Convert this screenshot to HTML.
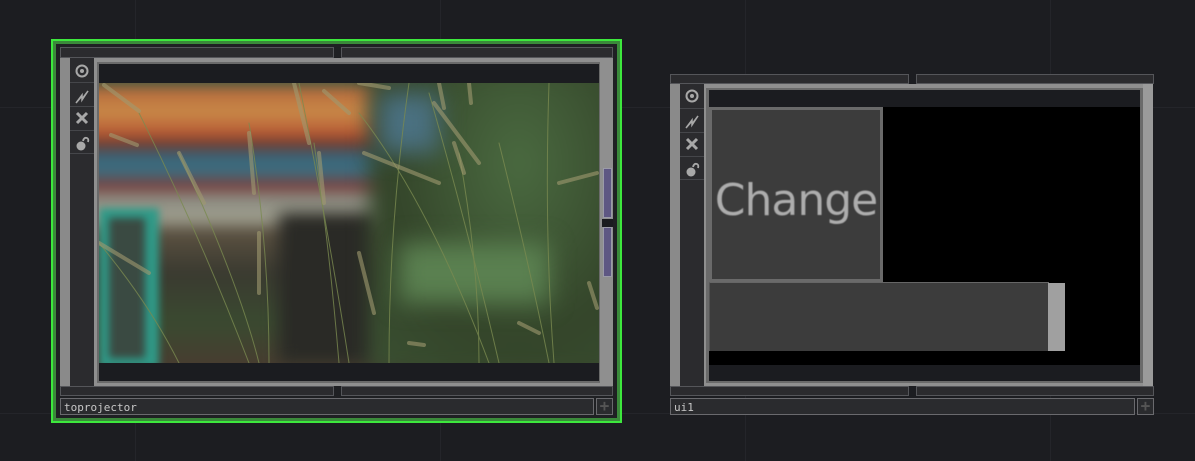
<!DOCTYPE html>
<html><head><style>
*{margin:0;padding:0;box-sizing:border-box}
body{width:1195px;height:461px;background:#1c1d21;position:relative;overflow:hidden;font-family:"DejaVu Sans Mono","Liberation Mono",monospace}
.a{position:absolute}
.gl{position:absolute;background:#24252a}
.tab{position:absolute;background:#2b2b2e;border:1px solid #55565a}
.name{position:absolute;background:#2a2b2e;border:1px solid #6a6a6e;color:#c8c8c8;font-size:11px;line-height:14px;padding-left:3px;padding-top:2px}
.plus{position:absolute;width:17px;height:17px;border:1px solid #6a6a6e;background:#2a2b2e;color:#555;font-size:16px;line-height:14px;text-align:center;font-weight:bold}
</style></head><body>
<div class="gl" style="left:135px;top:0;width:1px;height:461px"></div>
<div class="gl" style="left:440px;top:0;width:1px;height:461px"></div>
<div class="gl" style="left:745px;top:0;width:1px;height:461px"></div>
<div class="gl" style="left:1050px;top:0;width:1px;height:461px"></div>
<div class="gl" style="left:0;top:107px;width:1195px;height:1px"></div>
<div class="gl" style="left:0;top:413px;width:1195px;height:1px"></div>

<!-- left node -->
<div class="a" style="left:51px;top:39px;width:571px;height:384px;border:2px solid #3de83d;background:#3a8a3a"></div>
<div class="a" style="left:56px;top:44px;width:561px;height:374px;background:#1f2023"></div>
<div class="tab" style="left:60px;top:47px;width:274px;height:11px"></div>
<div class="tab" style="left:341px;top:47px;width:272px;height:11px"></div>
<div class="a" style="left:60px;top:58px;width:10px;height:328px;background:#8a8a8a"></div>
<div class="a" style="left:70px;top:58px;width:24px;height:328px;background:#2b2b2e"></div>
<div class="a" style="left:94px;top:58px;width:510px;height:328px;background:#8f8f8f"></div>
<div class="a" style="left:97px;top:62px;width:504px;height:321px;background:#6a6a6a"></div>
<div class="a" style="left:99px;top:64px;width:500px;height:317px;background:#1b1c20"></div>
<div class="a" style="left:99px;top:83px;width:500px;height:280px;overflow:hidden;background:#3e4a30">
 <div class="a" style="left:-20px;top:-10px;width:330px;height:310px;filter:blur(6px);background:linear-gradient(#4a5a40 0,#4a5a40 12px,#b86a3c 16px,#c98a48 40px,#b85a34 60px,#6a3a30 72px,#3a6478 82px,#3e6e80 100px,#7a3a38 112px,#8a8a80 125px,#a0a090 145px,#5a5040 160px,#3a3a30 200px,#3a4a30 250px,#4a3a30 300px)"></div>
 <div class="a" style="left:0;top:125px;width:60px;height:160px;filter:blur(4px);border:10px solid #2f9a88;border-right-width:14px;background:#3a4a42"></div>
 <div class="a" style="left:180px;top:130px;width:100px;height:150px;filter:blur(8px);background:#2a2a26"></div>
 <div class="a" style="left:270px;top:-10px;width:250px;height:300px;filter:blur(10px);background:radial-gradient(ellipse at 60% 30%,#4a6a40,#34452a 60%,#3a5032)"></div>
 <div class="a" style="left:280px;top:10px;width:60px;height:60px;filter:blur(12px);background:#4a7080"></div>
 <div class="a" style="left:300px;top:160px;width:150px;height:60px;filter:blur(12px);background:#5a8050"></div>
 <svg class="a" style="left:0;top:0" width="500" height="280" stroke-linecap="round" fill="none">
  <g stroke="#7a8a50" stroke-width="1" opacity=".8">
   <path d="M40 30 Q100 150 150 280"/><path d="M80 70 Q140 200 160 280"/><path d="M150 40 Q170 160 170 280"/>
   <path d="M200 0 Q230 150 250 280"/><path d="M215 60 Q230 160 240 280"/><path d="M310 0 Q290 140 290 280"/>
   <path d="M330 10 Q370 150 400 280"/><path d="M400 60 Q430 180 450 280"/><path d="M450 0 Q445 150 455 280"/>
   <path d="M0 160 Q50 220 80 280"/><path d="M260 30 Q330 120 390 280"/><path d="M360 70 Q380 180 380 280"/>
  </g>
  <g stroke="#a09a70" stroke-width="4" opacity=".6">
   <path d="M5 2 L40 28"/><path d="M12 52 L38 62"/><path d="M80 70 L105 120"/><path d="M150 50 L155 110"/>
   <path d="M195 0 L210 60"/><path d="M220 70 L225 120"/><path d="M225 8 L250 30"/><path d="M260 0 L290 5"/>
   <path d="M340 0 L345 25"/><path d="M370 0 L372 20"/><path d="M335 20 L380 80"/><path d="M265 70 L340 100"/>
   <path d="M0 160 L50 190"/><path d="M260 170 L275 230"/><path d="M355 60 L365 90"/><path d="M460 100 L498 90"/>
   <path d="M310 260 L325 262"/><path d="M160 150 L160 210"/><path d="M420 240 L440 250"/><path d="M490 200 L498 225"/>
  </g>
 </svg>
</div>
<div class="a" style="left:600px;top:58px;width:13px;height:328px;background:#8f8f8f"></div>
<div class="a" style="left:603px;top:168px;width:9px;height:50px;background:#5e5783;border:1px solid #9a9aa8"></div>
<div class="a" style="left:602px;top:219px;width:11px;height:8px;background:#1b1c20"></div>
<div class="a" style="left:603px;top:227px;width:9px;height:50px;background:#5e5783;border:1px solid #9a9aa8"></div>
<div class="tab" style="left:60px;top:386px;width:274px;height:10px"></div>
<div class="tab" style="left:341px;top:386px;width:272px;height:10px"></div>
<div class="name" style="left:60px;top:398px;width:534px;height:17px">toprojector</div>
<div class="plus" style="left:596px;top:398px">+</div>

<!-- icons left -->
<svg class="a" style="left:70px;top:58px" width="24" height="96">
 <g fill="#a8a8a8" stroke="#a8a8a8">
  <circle cx="12" cy="13" r="5.5" fill="none" stroke-width="2"/><circle cx="12" cy="13" r="2" stroke="none"/>
  <path d="M6 45 L12 38 L12 42 L18 33 L12 41 L12 37 Z" stroke-width="1.5"/>
  <path d="M7 55 L17 65 M17 55 L7 65" stroke-width="3"/>
  <circle cx="11" cy="88" r="4.5" stroke="none"/><path d="M13 83 Q14 79 17 80 Q19 81 18 84" fill="none" stroke-width="1.8"/>
 </g>
 <g stroke="#45464a"><path d="M0 24.5H24M0 48.5H24M0 72.5H24M0 95.5H24"/></g>
</svg>

<!-- right node -->
<div class="tab" style="left:670px;top:74px;width:239px;height:10px"></div>
<div class="tab" style="left:916px;top:74px;width:238px;height:10px"></div>
<div class="a" style="left:670px;top:84px;width:10px;height:302px;background:#8a8a8a"></div>
<div class="a" style="left:680px;top:84px;width:24px;height:302px;background:#2b2b2e"></div>
<svg class="a" style="left:680px;top:84px" width="24" height="96">
 <g fill="#a8a8a8" stroke="#a8a8a8">
  <circle cx="12" cy="12" r="5.5" fill="none" stroke-width="2"/><circle cx="12" cy="12" r="2" stroke="none"/>
  <path d="M6 44 L12 37 L12 41 L18 32 L12 40 L12 36 Z" stroke-width="1.5"/>
  <path d="M7 55 L17 65 M17 55 L7 65" stroke-width="3"/>
  <circle cx="11" cy="88" r="4.5" stroke="none"/><path d="M13 83 Q14 79 17 80 Q19 81 18 84" fill="none" stroke-width="1.8"/>
 </g>
 <g stroke="#45464a"><path d="M0 24.5H24M0 48.5H24M0 72.5H24M0 95.5H24"/></g>
</svg>
<div class="a" style="left:704px;top:84px;width:449px;height:302px;background:#8f8f8f"></div>
<div class="a" style="left:706px;top:88px;width:437px;height:295px;background:#6a6a6a"></div>
<div class="a" style="left:709px;top:90px;width:431px;height:291px;background:#1b1c20"></div>
<div class="a" style="left:709px;top:107px;width:431px;height:258px;background:#000"></div>
<div class="a" style="left:709px;top:107px;width:174px;height:175px;background:#3c3c3c;border:3px solid #6a6a6a"></div>
<div class="a" style="left:709px;top:175px;width:174px;font-family:'DejaVu Sans',sans-serif;font-size:44px;line-height:52px;color:#adadad;text-align:center;filter:blur(.6px);letter-spacing:-1px">Change</div>
<div class="a" style="left:709px;top:282px;width:340px;height:69px;background:#3c3c3c;border-top:1px solid #666;border-left:1px solid #555"></div>
<div class="a" style="left:1048px;top:283px;width:17px;height:68px;background:#a0a0a0"></div>
<div class="a" style="left:1143px;top:84px;width:10px;height:302px;background:#9a9a9a"></div>
<div class="tab" style="left:670px;top:386px;width:239px;height:10px"></div>
<div class="tab" style="left:916px;top:386px;width:238px;height:10px"></div>
<div class="name" style="left:670px;top:398px;width:465px;height:17px">ui1</div>
<div class="plus" style="left:1137px;top:398px">+</div>
</body></html>
